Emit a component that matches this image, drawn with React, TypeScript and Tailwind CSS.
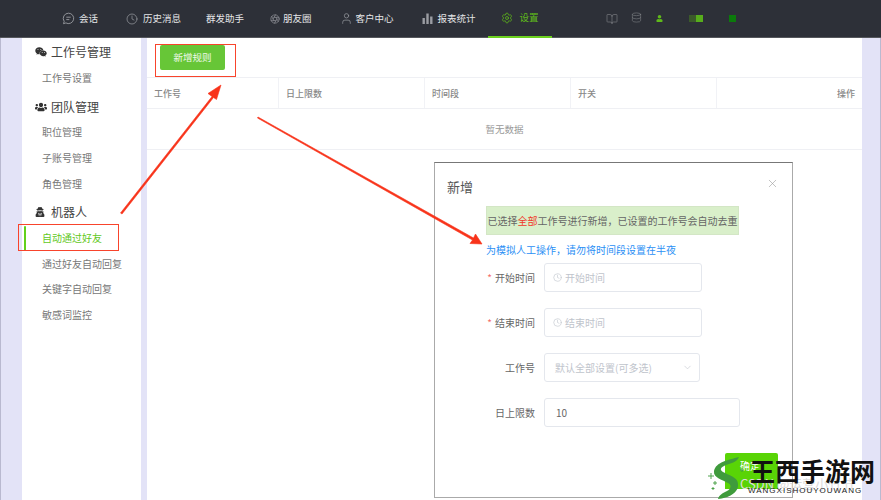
import React from 'react'
import { Aperture, BookOpen, ChevronDown, Clock, Database, Settings, User, X } from 'lucide-react'
import { FaUser, FaUsers, FaUserSecret, FaWeixin } from 'react-icons/fa'

const cjk = "font-['Noto_Sans_CJK_SC','Liberation_Sans',sans-serif]"

function ChatIcon() {
  return (
    <svg width="13" height="13" viewBox="0 0 13 13" fill="none" stroke="#9a9ca2" strokeWidth="0.9">
      <path d="M6.5 1.2a5.2 5.2 0 1 1-2.6 9.7L1.5 11.7l.7-2.3A5.2 5.2 0 0 1 6.5 1.2z" />
      <path d="M4.3 5.2h4.4M4.3 7.6h3" />
    </svg>
  )
}

function BarsIcon() {
  return (
    <svg width="11" height="11" viewBox="0 0 11 11" fill="#9a9ca2">
      <rect x="0.5" y="5" width="2.4" height="6" />
      <rect x="4.3" y="0.5" width="2.4" height="10.5" />
      <rect x="8.1" y="3.5" width="2.4" height="7.5" />
    </svg>
  )
}

function NavBar() {
  const text = 'text-[9.5px] text-[#e4e5e7] whitespace-nowrap leading-none'
  return (
    <div className="flex items-center h-[38px] bg-[#2d3038] border-b border-[#55575c] shrink-0">
      <div className="ml-[62px] w-[13px] flex"><ChatIcon /></div>
      <span className={`ml-[4px] ${text}`}>会话</span>
      <div className="ml-[28px] flex"><Clock size={12} color="#9a9ca2" strokeWidth={1.4} /></div>
      <span className={`ml-[5px] ${text}`}>历史消息</span>
      <span className={`ml-[25px] ${text}`}>群发助手</span>
      <div className="ml-[26px] flex"><Aperture size={10} color="#9a9ca2" strokeWidth={1.5} /></div>
      <span className={`ml-[3px] ${text}`}>朋友圈</span>
      <div className="ml-[28px] flex"><User size={13} color="#9a9ca2" strokeWidth={1.3} /></div>
      <span className={`ml-[3px] ${text}`}>客户中心</span>
      <div className="ml-[28px] flex"><BarsIcon /></div>
      <span className={`ml-[5px] ${text}`}>报表统计</span>
      <div className="ml-[12px] w-[64px] h-[38px] flex items-center justify-center gap-[7px] border-b-2 border-[#6cd11f]">
        <Settings size={12} color="#5fb91a" strokeWidth={1.5} />
        <span className="text-[9.5px] text-[#5fb91a] leading-none">设置</span>
      </div>
      <div className="ml-[54px] flex"><BookOpen size={12} color="#85878c" strokeWidth={1.2} /></div>
      <div className="ml-[13px] flex -mt-[2px]"><Database size={11} color="#85878c" strokeWidth={1.2} /></div>
      <div className="ml-[14px] flex"><FaUser size={7} color="#5fb91a" /></div>
      <div className="ml-[26px] flex">
        <div className="w-[7px] h-[7px] bg-[#3b5a2a]" />
        <div className="w-[7px] h-[7px] bg-[#57ad1c]" />
      </div>
      <div className="ml-[26px] w-[7px] h-[7px] bg-[#0b7a0b]" />
    </div>
  )
}

function Heading({ icon, label, className = '' }: { icon: React.ReactNode; label: string; className?: string }) {
  return (
    <div className={`flex items-center h-[26px] pl-[13px] ${className}`}>
      <div className="w-[16px] flex">{icon}</div>
      <span className="text-[12px] text-[#444] leading-none">{label}</span>
    </div>
  )
}

function Item({ label, active }: { label: string; active?: boolean }) {
  return (
    <div className={`flex items-center h-[25.6px] pl-[20px] text-[10px] leading-none ${active ? 'text-[#62c81c]' : 'text-[#777]'}`}>
      {label}
    </div>
  )
}

function Sidebar() {
  return (
    <div className="w-[119px] h-full bg-white pt-[1px] shrink-0 relative">
      <Heading icon={<FaWeixin size={12} color="#333" />} label="工作号管理" />
      <Item label="工作号设置" />
      <Heading icon={<FaUsers size={12} color="#333" />} label="团队管理" className="mt-[3px]" />
      <Item label="职位管理" />
      <Item label="子账号管理" />
      <Item label="角色管理" />
      <Heading icon={<FaUserSecret size={10} color="#333" />} label="机器人" className="mt-[3px]" />
      <div className="relative">
        <div className="absolute left-[2px] top-[1px] bottom-[0px] w-[2px] rounded-full bg-[#62d01c]" />
        <Item label="自动通过好友" active />
      </div>
      <Item label="通过好友自动回复" />
      <Item label="关键字自动回复" />
      <Item label="敏感词监控" />
    </div>
  )
}

function MainTable() {
  const th = 'h-[30px] flex items-center px-[7px] text-[9px] font-medium text-[#888] leading-none border-r border-[#f1f2f6]'
  return (
    <div className="flex-1 h-full bg-white">
      <div className="h-[40px] pl-[13px] pt-[7px] border-b border-[#eff0f4]">
        <button className="block w-[65px] h-[25px] rounded-[2px] bg-[#67c637] text-white/90 text-[9.5px] leading-none">新增规则</button>
      </div>
      <div className="grid grid-cols-[132px_146px_146px_146px_1fr] border-b border-[#eff0f4]">
        <div className={th}>工作号</div>
        <div className={th}>日上限数</div>
        <div className={th}>时间段</div>
        <div className={th}>开关</div>
        <div className={`${th} justify-end border-r-0`}>操作</div>
      </div>
      <div className="h-[41px] flex items-center justify-center text-[9.5px] text-[#999] border-b border-[#eff0f4]">暂无数据</div>
    </div>
  )
}

function Field({ label, required, children }: { label: string; required?: boolean; children: React.ReactNode }) {
  return (
    <div className="flex items-center">
      <div className="w-[49px] text-right text-[10px] text-[#666] leading-none whitespace-nowrap flex justify-end">
        {required && <span className="text-[#f56c6c] mr-[3px]">*</span>}
        {label}
      </div>
      <div className="ml-[9px]">{children}</div>
    </div>
  )
}

function TimeInput({ placeholder }: { placeholder: string }) {
  return (
    <div className="w-[158px] h-[29px] border border-[#e4e7ed] rounded-[3px] bg-white flex items-center pl-[8px]">
      <Clock size={9} color="#c0c4cc" strokeWidth={1.6} />
      <span className="ml-[3px] text-[10px] text-[#c0c4cc] leading-none">{placeholder}</span>
    </div>
  )
}

function Modal() {
  return (
    <div className={`absolute left-[434px] top-[162px] w-[359px] h-[336px] bg-white border border-[#aaa] border-t-[#777] ${cjk}`}>
      <div className="relative pl-[12px] pt-[17px] h-[43px]">
        <span className="text-[13px] text-[#555] leading-none block">新增</span>
        <X size={13} color="#999" strokeWidth={1.1} className="absolute right-[13px] top-[14px]" />
      </div>
      <div className="pl-[51px]">
        <div className="w-[253px] h-[29px] flex items-center justify-center bg-[#d9efca] border border-[#d3e6c5] text-[10px] text-[#666] leading-none whitespace-nowrap">
          已选择<span className="text-[#f0382a]">全部</span>工作号进行新增，已设置的工作号会自动去重
        </div>
        <div className="mt-[8px] h-[14px] flex items-center text-[10px] text-[#2b8ff5] leading-none">为模拟人工操作，请勿将时间段设置在半夜</div>
        <div className="mt-[6px] flex flex-col gap-[16px]">
          <Field label="开始时间" required><TimeInput placeholder="开始时间" /></Field>
          <Field label="结束时间" required><TimeInput placeholder="结束时间" /></Field>
          <Field label="工作号">
            <div className="w-[156px] h-[29px] border border-[#e4e7ed] rounded-[3px] flex items-center justify-between pl-[10px] pr-[6px] text-[10px] text-[#c0c4cc]">
              默认全部设置(可多选)
              <ChevronDown size={11} color="#c0c4cc" strokeWidth={1.3} />
            </div>
          </Field>
          <Field label="日上限数">
            <div className="w-[196px] h-[29px] border border-[#e4e7ed] rounded-[3px] flex items-center pl-[11px] text-[10px] text-[#666]">10</div>
          </Field>
        </div>
      </div>
      <div className="flex justify-end pr-[14px] mt-[26px]">
        <div className="w-[53px] h-[36px] rounded-t-[2px] bg-[#59d406] text-white text-[10px] pl-[15px] pt-[8px] leading-none">确定</div>
      </div>
    </div>
  )
}

function Annotations() {
  return (
    <>
      <div className="absolute left-[155px] top-[44px] w-[81px] h-[33px] border border-[#f8442c]" />
      <div className="absolute left-[18px] top-[224px] w-[101px] h-[27px] border border-[#f8442c]" />
      <svg className="absolute inset-0 pointer-events-none" width="881" height="500" viewBox="0 0 881 500">
        <path d="M120.500 213 L212 96.500 L208 93.500 L221 85 L216.500 99.500 L213.500 97.500 L122 214 Z" fill="#f8331a" stroke="#f8331a" strokeWidth="0.6" />
        <path d="M258 117 L473.500 238 L475.500 234 L482 244 L470 243.500 L472.500 240 L257.500 118 Z" fill="#f8331a" stroke="#f8331a" strokeWidth="0.6" />
      </svg>
    </>
  )
}

function Watermark() {
  return (
    <div className="absolute left-[708px] top-[456px] w-[173px] h-[44px]">
      <span className={`absolute left-[32px] top-[21px] text-[13px] text-[#dcdcdc] leading-none whitespace-nowrap ${cjk}`}>CSDN @运营小竹节</span>
      <svg className="absolute left-0 top-0" width="42" height="44" viewBox="0 0 42 44" fill="none">
        <path d="M31 1C20 4 8 6 6 15c-1 7 9 9 14 12 4 2 3 6-1 8-4 2-8 4-9 8 10-1 21-6 20-15 0-7-10-9-15-12-3-2-3-4 1-6 5-3 13-3 15-9z" fill="#3f9b3c" />
        <path d="M3 17v6M0 20h6M7 25v4M5 27h4M5 31v3M3.500 32.500h3M34 12v4M32 14h4" stroke="#3f9b3c" strokeWidth="0.9" />
      </svg>
      <span className="absolute left-[42px] top-[2px] text-[25px] font-bold leading-none text-[#111] whitespace-nowrap font-['Noto_Sans_CJK_SC',serif]">王西手游网</span>
      <span className="absolute left-[40px] top-[31px] text-[8px] tracking-[1px] leading-none text-[#222] whitespace-nowrap font-['Liberation_Sans',sans-serif]">WANGXISHOUYOUWANG</span>
    </div>
  )
}

export default function App() {
  return (
    <div className={`relative w-[881px] h-[500px] overflow-hidden flex flex-col bg-[#e3e3f7] ${cjk}`}>
      <NavBar />
      <div className="flex flex-1 min-h-0 border-x border-[#b9b9d0]">
        <div className="w-[21px] shrink-0" />
        <Sidebar />
        <div className="w-[6px] shrink-0" />
        <MainTable />
        <div className="w-[18px] shrink-0" />
      </div>
      <Modal />
      <Annotations />
      <Watermark />
    </div>
  )
}
